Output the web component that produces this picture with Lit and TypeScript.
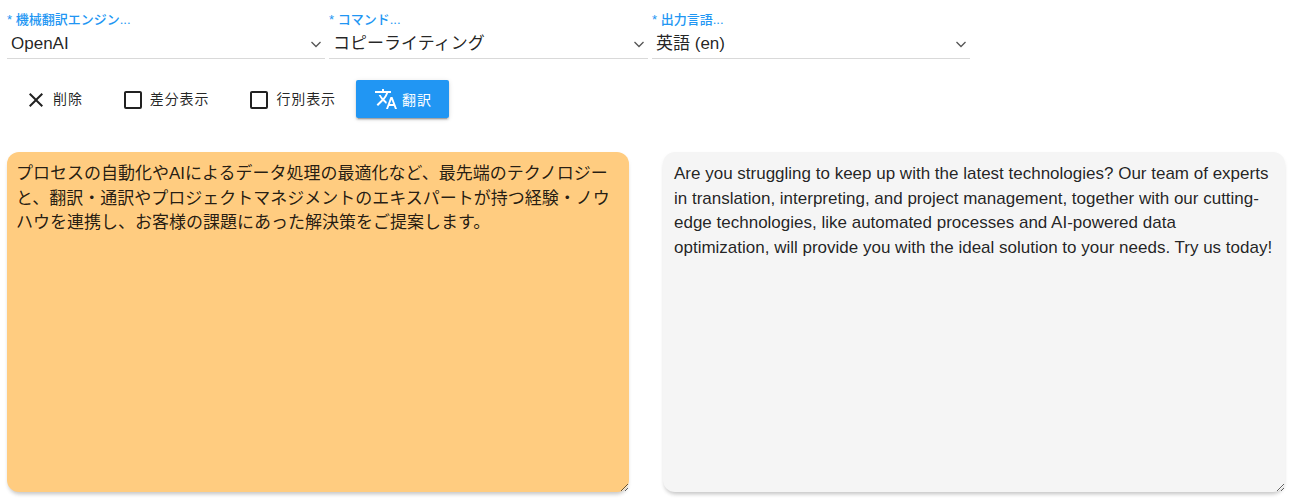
import { LitElement, html, css, svg } from "lit";
import { customElement } from "lit/decorators.js";

const ICONS = {
  close:
    "M19,6.41L17.59,5L12,10.59L6.41,5L5,6.41L10.59,12L5,17.59L6.41,19L12,13.41L17.59,19L19,17.59L13.41,12L19,6.41Z",
  box: "M19,3H5C3.89,3 3,3.89 3,5V19A2,2 0 0,0 5,21H19A2,2 0 0,0 21,19V5C21,3.89 20.1,3 19,3M19,5V19H5V5H19Z",
  translate:
    "M12.87,15.07L10.33,12.56L10.36,12.53C12.1,10.59 13.34,8.36 14.07,6H17V4H10V2H8V4H1V6H12.17C11.5,7.92 10.44,9.75 9,11.35C8.07,10.32 7.3,9.19 6.69,8H4.69C5.42,9.63 6.42,11.17 7.67,12.56L2.58,17.58L4,19L9,14L12.11,17.11L12.87,15.07M18.5,10H16.5L12,22H14L15.12,19H19.87L21,22H23L18.5,10M15.88,17L17.5,12.67L19.12,17H15.88Z",
};

const icon = (d: string) => html`<svg class="icon" viewBox="0 0 24 24">${svg`<path d=${d}></path>`}</svg>`;

const FIELDS = [
  { label: "* 機械翻訳エンジン...", value: "OpenAI", width: 318 },
  { label: "* コマンド...", value: "コピーライティング", width: 319 },
  { label: "* 出力言語...", value: "英語 (en)", width: 318 },
];

@customElement("app-root")
export class AppRoot extends LitElement {
  static styles = css`
    :host {
      display: block;
      height: 503px;
      overflow: hidden;
      background: #fff;
      padding: 12px 0 0 7px;
      box-sizing: border-box;
      font-family: "Liberation Sans", "Noto Sans CJK JP", sans-serif;
      color: rgba(0, 0, 0, 0.87);
    }

    .fields {
      display: flex;
      gap: 4px;
    }

    .field {
      display: flex;
      flex-direction: column;
      height: 46px;
      border-bottom: 1px solid #d9d9d9;
      box-sizing: content-box;
    }

    .field label {
      font-size: 13px;
      font-weight: 500;
      line-height: 16px;
      color: #2196f3;
      height: 20px;
      white-space: nowrap;
    }

    .control {
      display: flex;
      align-items: center;
      justify-content: space-between;
      height: 24px;
      font-size: 17px;
      line-height: 24px;
      padding-left: 4px;
    }

    .chevron {
      width: 14px;
      height: 14px;
      margin-right: 2px;
      flex: none;
      fill: none;
      stroke: #555;
      stroke-width: 1.3;
    }

    .toolbar {
      display: flex;
      align-items: center;
      height: 38px;
      margin-top: 21px;
      padding-left: 17px;
      font-size: 14px;
      letter-spacing: 0.9px;
    }

    .icon {
      width: 24px;
      height: 24px;
      fill: currentColor;
      flex: none;
    }

    .action {
      display: flex;
      align-items: center;
      gap: 5px;
      height: 38px;
      line-height: 38px;
    }

    .action .icon {
      margin-top: 2px;
    }

    .delete {
      margin-right: 38px;
    }

    .check {
      margin-right: 38px;
    }

    .check:last-of-type {
      margin-right: 20px;
    }

    .check .icon {
      margin-top: 1px;
    }

    .primary {
      display: flex;
      align-items: center;
      gap: 4px;
      height: 38px;
      width: 93px;
      padding: 0 0 0 18px;
      box-sizing: border-box;
      border: none;
      border-radius: 2px;
      background: #2196f3;
      color: #fff;
      font: inherit;
      letter-spacing: inherit;
      box-shadow: 0 3px 1px -2px rgba(0, 0, 0, 0.2), 0 2px 2px 0 rgba(0, 0, 0, 0.14), 0 1px 5px 0 rgba(0, 0, 0, 0.12);
    }

    .panes {
      display: flex;
      gap: 34px;
      margin-top: 34px;
    }

    textarea {
      display: block;
      width: 622px;
      height: 340px;
      margin: 0;
      border: none;
      outline: none;
      border-radius: 12px;
      box-sizing: border-box;
      font-family: "Liberation Sans", "Noto Sans CJK JP", sans-serif;
      font-size: 17px;
      line-height: 24.5px;
      color: rgba(0, 0, 0, 0.87);
      box-shadow: 0 4px 4px -2px rgba(0, 0, 0, 0.2), 0 2px 4px 0 rgba(0, 0, 0, 0.05);
    }

    .source {
      background: #ffcc80;
      padding: 10px 12px 9px 9px;
    }

    .result {
      background: #f5f5f5;
      padding: 10px 12px 9px 11px;
    }
  `;

  render() {
    return html`
      <div class="fields">
        ${FIELDS.map(
          (f) => html`
            <div class="field" style="width: ${f.width}px">
              <label>${f.label}</label>
              <div class="control">
                <span>${f.value}</span>
                <svg class="chevron" viewBox="0 0 14 14"><path d="M2.5 5L7 9.5 11.5 5"></path></svg>
              </div>
            </div>
          `
        )}
      </div>

      <div class="toolbar">
        <div class="action delete">${icon(ICONS.close)}<span>削除</span></div>
        <div class="action check">${icon(ICONS.box)}<span>差分表示</span></div>
        <div class="action check">${icon(ICONS.box)}<span>行別表示</span></div>
        <button class="primary">${icon(ICONS.translate)}<span>翻訳</span></button>
      </div>

      <div class="panes">
        <textarea class="source">プロセスの自動化やAIによるデータ処理の最適化など、最先端のテクノロジーと、翻訳・通訳やプロジェクトマネジメントのエキスパートが持つ経験・ノウハウを連携し、お客様の課題にあった解決策をご提案します。</textarea>
        <textarea class="result">Are you struggling to keep up with the latest technologies? Our team of experts in translation, interpreting, and project management, together with our cutting-edge technologies, like automated processes and AI-powered data optimization, will provide you with the ideal solution to your needs. Try us today!</textarea>
      </div>
    `;
  }
}
